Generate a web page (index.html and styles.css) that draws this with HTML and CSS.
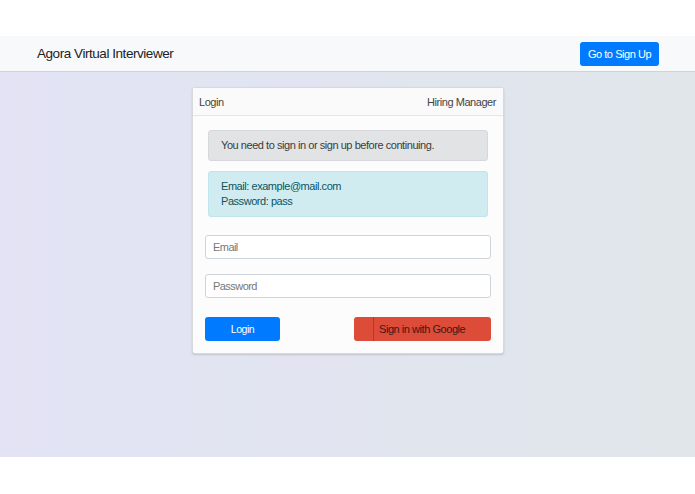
FILE: index.html
```html
<!DOCTYPE html>
<html>
<head>
<meta charset="utf-8">
<link rel="stylesheet" href="styles.css">
</head>
<body>
<div class="topgap"></div>
<nav class="navbar">
  <span class="brand">Agora Virtual Interviewer</span>
  <button class="btn btn-primary nav-btn">Go to Sign Up</button>
</nav>
<main class="main">
  <div class="card">
    <div class="card-header">
      <span>Login</span>
      <span>Hiring Manager</span>
    </div>
    <div class="card-body">
      <div class="alert alert-secondary">You need to sign in or sign up before continuing.</div>
      <div class="alert alert-info">Email: example@mail.com<br>Password: pass</div>
      <div class="form">
        <input class="input" type="text" placeholder="Email">
        <input class="input" type="password" placeholder="Password">
        <div class="actions">
          <button class="btn btn-primary login-btn">Login</button>
          <button class="btn google-btn"><span class="g-icon"></span><span class="g-text">Sign in with Google</span></button>
        </div>
      </div>
    </div>
  </div>
</main>
<div class="bottomgap"></div>
</body>
</html>
```
FILE: styles.css
```css
* { box-sizing: border-box; }
html, body { margin: 0; padding: 0; background: #fff; }
body { font-family: "Liberation Sans", Arial, sans-serif; color: #333; letter-spacing: -0.45px; }
.topgap { height: 36px; background: #fff; }
.navbar {
  height: 36px;
  background: #f8f9fa;
  border-bottom: 1px solid #cfd3d8;
  display: flex;
  align-items: center;
  justify-content: space-between;
  padding: 0 36px 0 37px;
}
.brand { font-size: 13.5px; color: #222; }
.btn {
  border: none;
  border-radius: 3px;
  font-family: inherit;
  letter-spacing: inherit;
  cursor: pointer;
  padding: 0;
}
.btn-primary { background: #007bff; color: #fff; }
.nav-btn { width: 79px; height: 24px; font-size: 11px; }
.main {
  height: 385px;
  background: linear-gradient(90deg, #e3e3f5 0%, #e1e5ef 55%, #e0e6ea 100%);
  padding-top: 15px;
}
.card {
  width: 312px;
  margin: 0 auto 0 192px;
  background: #fcfcfc;
  border: 1px solid #d8d9dc;
  border-radius: 3px;
  box-shadow: 0 1px 2px rgba(0,0,0,0.15);
}
.card-header {
  height: 28px;
  display: flex;
  align-items: center;
  justify-content: space-between;
  padding: 0 7px 0 6px;
  font-size: 11px;
  color: #444;
  border-bottom: 1px solid #e6e6e6;
  background: #fafafa;
}
.card-body { padding: 14px 12px 12px 12px; }
.alert {
  margin: 0 3px;
  border-radius: 3px;
  font-size: 11px;
  padding: 0 12px;
}
.alert-secondary {
  height: 31px;
  line-height: 29px;
  background: #e2e3e5;
  border: 1px solid #d6d8db;
  color: #383d41;
}
.alert-info {
  margin-top: 10px;
  height: 46px;
  padding-top: 7px;
  line-height: 15px;
  background: #d1ecf1;
  border: 1px solid #bee5eb;
  color: #0c5460;
}
.form { display: flex; flex-direction: column; }
.input {
  height: 24px;
  margin-top: 18px;
  border: 1px solid #ced4da;
  border-radius: 3px;
  background: #fff;
  font-family: inherit;
  letter-spacing: -0.55px;
  font-size: 11px;
  padding: 0 7px;
}
.input + .input { margin-top: 15px; }
.input::placeholder { color: #777; }
.actions {
  display: flex;
  justify-content: space-between;
  margin-top: 19px;
}
.login-btn { width: 75px; height: 24px; font-size: 10.5px; }
.google-btn {
  width: 137px;
  height: 24px;
  background: #dd4b39;
  color: #3a1a16;
  display: flex;
  align-items: stretch;
  font-size: 11px;
}
.g-icon { width: 20px; border-right: 1px solid rgba(0,0,0,0.2); }
.g-text { display: flex; align-items: center; padding-left: 5px; }
.bottomgap { height: 37px; background: #fff; }
```
